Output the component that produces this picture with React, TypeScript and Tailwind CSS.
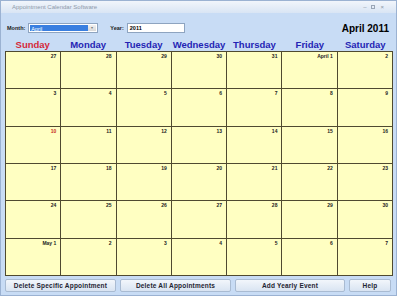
import React from 'react';

const days = ['Sunday', 'Monday', 'Tuesday', 'Wednesday', 'Thursday', 'Friday', 'Saturday'];

const weeks: string[][] = [
  ['27', '28', '29', '30', '31', 'April 1', '2'],
  ['3', '4', '5', '6', '7', '8', '9'],
  ['10', '11', '12', '13', '14', '15', '16'],
  ['17', '18', '19', '20', '21', '22', '23'],
  ['24', '25', '26', '27', '28', '29', '30'],
  ['May 1', '2', '3', '4', '5', '6', '7'],
];

const buttons = [
  { label: 'Delete Specific Appointment', w: 'w-[111px]' },
  { label: 'Delete All Appointments', w: 'w-[111px]' },
  { label: 'Add Yearly Event', w: 'w-[110px]' },
  { label: 'Help', w: 'w-[42px]' },
];

export default function App() {
  return (
    <div className="w-[400px] h-[299px] bg-white overflow-hidden" style={{ fontFamily: '"Liberation Sans", Arial, sans-serif' }}>
      <div className="w-[397px] h-[296px] border border-[#9bb2d2] bg-[#c8dcf5] flex flex-col">
        {/* title bar */}
        <div className="h-[12px] flex items-center justify-between px-[11px] bg-gradient-to-b from-[#f1f5fb] to-[#d9e5f4]">
          <span className="text-[6px] text-[#8d9aab] leading-none">Appointment Calendar Software</span>
          <div className="flex items-center gap-[5px] text-[#8a96a6] text-[6px] leading-none pr-[1px]">
            <span>–</span>
            <span className="w-[4px] h-[4px] border border-[#9aa6b6]"></span>
            <span>×</span>
          </div>
        </div>

        {/* controls row */}
        <div className="flex items-center h-[20px] mt-[5px] pl-[6px] pr-[4px]">
          <span className="text-[5.5px] font-bold text-[#1a1a1a]">Month:</span>
          <div className="ml-[3px] w-[70px] h-[10px] bg-white border border-[#8ea4c0] flex p-px">
            <div className="flex-1 bg-[#3a7fe0] text-white text-[5.5px] leading-[8px] pl-[1px]">April</div>
            <div className="w-[8px] bg-gradient-to-b from-[#f0f0f0] to-[#d8d8d8] flex items-center justify-center">
              <span className="text-[4px] text-[#777] leading-none">▾</span>
            </div>
          </div>
          <span className="ml-[12px] text-[5.5px] font-bold text-[#1a1a1a]">Year:</span>
          <div className="ml-[3px] w-[58px] h-[10px] bg-white border border-[#8ea4c0] text-[5.5px] font-bold leading-[8px] pl-[2px]">2011</div>
          <span className="ml-auto mr-[3px] text-[10px] font-bold text-black">April 2011</span>
        </div>

        {/* day headers */}
        <div className="ml-[4px] w-[388px] grid grid-cols-7 h-[13px] items-end">
          {days.map((d, i) => (
            <div
              key={d}
              className={`text-center text-[9.5px] font-bold leading-[12px] ${i === 0 ? 'text-[#d52838]' : 'text-[#2424b4]'}`}
            >
              {d}
            </div>
          ))}
        </div>

        {/* calendar grid */}
        <div className="ml-[4px] w-[388px] h-[225px] grid grid-cols-7 grid-rows-6 gap-px p-px bg-[#4f4a30]">
          {weeks.map((week, wi) =>
            week.map((d, di) => (
              <div key={`${wi}-${di}`} className="bg-[#ffffc2] flex justify-end pt-[1px] pr-[4px]">
                <span
                  className={`text-[5px] font-bold leading-[6px] ${wi === 2 && di === 0 ? 'text-[#c83020]' : 'text-[#222]'}`}
                >
                  {d}
                </span>
              </div>
            ))
          )}
        </div>

        {/* buttons */}
        <div className="flex gap-[4px] ml-[4px] mt-[3px]">
          {buttons.map((b) => (
            <div
              key={b.label}
              className={`${b.w} h-[13px] rounded-[2px] border border-[#a9bbd2] bg-gradient-to-b from-[#f2f6fb] to-[#d9e4f2] flex items-center justify-center`}
            >
              <span className="text-[6.5px] font-bold text-[#1e2432] tracking-[0.2px]">{b.label}</span>
            </div>
          ))}
        </div>
      </div>
    </div>
  );
}
